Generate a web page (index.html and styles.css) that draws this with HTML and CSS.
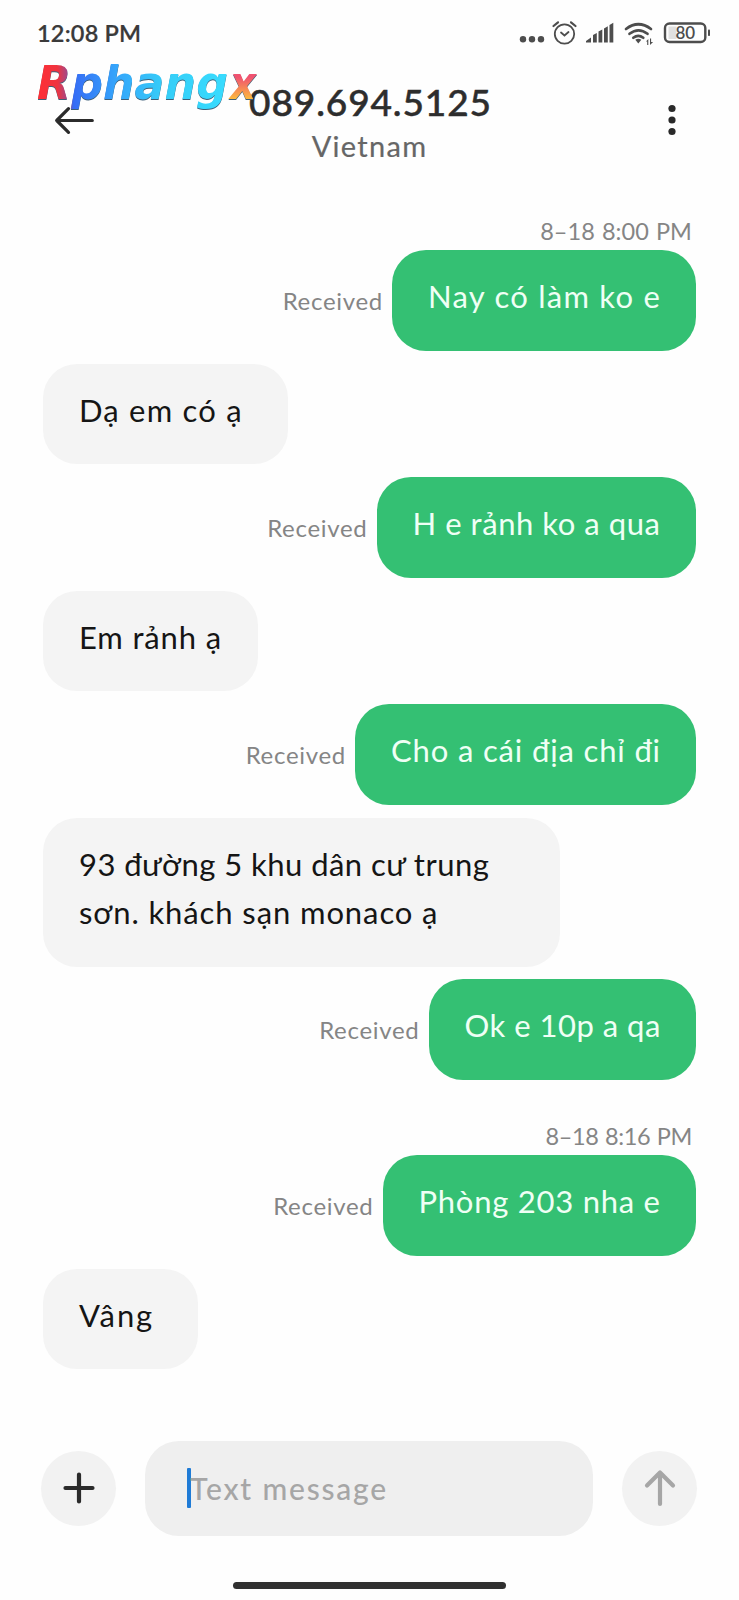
FILE: index.html
```html
<!DOCTYPE html>
<html lang="vi">
<head>
<meta charset="utf-8">
<title>Messages</title>
<link rel="stylesheet" href="styles.css">
</head>
<body>
<div class="phone">
  <div class="status">
    <span class="clock">12:08 PM</span>
    <svg class="status-icons" width="200" height="32" viewBox="0 0 200 32">
      <g fill="#4d4d4d">
        <circle cx="13" cy="22.300" r="3.200"/><circle cx="22" cy="22.300" r="3.200"/><circle cx="31" cy="22.300" r="3.200"/>
        <path d="M76 25.500v-1.500l5-3.500v5zM83 18l3.800-2v9.500H83zM88.500 14.500l3.800-2v13h-3.800zM94 11.500l3.800-2.200v16.200H94zM99.500 8l3.800-2.200v19.700h-3.800z"/>
        <path d="M125.300 22.800q3-2 6 0l-3 3.700z"/>
        <path d="M136 24.500l2.300-2.500v6h-1.100v-3.500zM140 21.500h1.100v3.500h2l-3.100 3z"/>
      </g>
      <g fill="none" stroke="#4d4d4d" stroke-linecap="round">
        <circle cx="54.500" cy="17" r="9.700" stroke-width="1.800"/>
        <path d="M51 15.500l3.500 3 4-3.500" stroke-width="1.800"/>
        <path d="M43.500 9l4.500-3.700M61 5.300l4.500 3.700" stroke-width="2.200"/>
        <path d="M116 12q12.300-9.500 25 0M119.500 16.800q9-7 18 0M123.300 20.800q5-3.800 10 0" stroke-width="2.700"/>
      </g>
      <rect x="158.500" y="9.500" width="8" height="12.500" fill="#e0e0e0"/>
      <rect x="155" y="6.500" width="40.300" height="18.500" rx="4.500" fill="none" stroke="#4d4d4d" stroke-width="2.400"/>
      <rect x="198" y="12.500" width="2" height="6.500" rx=".8" fill="#4d4d4d"/>
      <text class="battery" x="175.300" y="21.800" text-anchor="middle">80</text>
    </svg>
  </div>

  <div class="header">
    <svg class="back" width="42" height="30" viewBox="0 0 42 30" fill="none" stroke="#2b2b2b" stroke-width="3.200" stroke-linecap="round" stroke-linejoin="round"><path d="M38.300 14.500H2.700M14.500 2.700L2.700 14.500l11.800 11.800"/></svg>
    <div class="contact">
      <div class="number">089.694.5125</div>
      <div class="country">Vietnam</div>
    </div>
    <svg class="more" width="10" height="32" viewBox="0 0 10 32" fill="#292929"><circle cx="5" cy="4.500" r="3.600"/><circle cx="5" cy="16" r="3.600"/><circle cx="5" cy="27.500" r="3.600"/></svg>
    <svg class="logo" width="230" height="56" viewBox="0 0 230 56">
      <defs>
        <linearGradient id="word" gradientUnits="userSpaceOnUse" x1="5" y1="0" x2="200" y2="0">
          <stop offset="0" stop-color="#ff2f35"/><stop offset=".1" stop-color="#ef3440"/><stop offset=".165" stop-color="#8b4f9e"/><stop offset=".18" stop-color="#366cf5"/><stop offset=".4" stop-color="#35a5fb"/><stop offset=".65" stop-color="#36cef8"/><stop offset="1" stop-color="#38ddff"/>
        </linearGradient>
        <linearGradient id="ex" x1="0" y1="0" x2="0" y2="1"><stop offset=".4" stop-color="#f05270"/><stop offset=".8" stop-color="#fcb83f"/></linearGradient>
      </defs>
      <text class="logo-word" x="4" y="38.500" textLength="191" lengthAdjust="spacingAndGlyphs" fill="url(#word)">Rphang</text>
      <text class="logo-x" x="197" y="38.500" textLength="26" lengthAdjust="spacingAndGlyphs" fill="url(#ex)">x</text>
    </svg>
  </div>

  <div class="thread">
    <div class="stamp">8–18 8:00 PM</div>
    <div class="row sent"><span class="state">Received</span><div class="bubble m1">Nay có làm ko e</div></div>
    <div class="row"><div class="bubble m2">Dạ em có ạ</div></div>
    <div class="row sent"><span class="state">Received</span><div class="bubble m3">H e rảnh ko a qua</div></div>
    <div class="row"><div class="bubble m4">Em rảnh ạ</div></div>
    <div class="row sent"><span class="state">Received</span><div class="bubble m5">Cho a cái địa chỉ đi</div></div>
    <div class="row"><div class="bubble m6"><span class="line1">93 đường 5 khu dân cư trung</span><br><span class="line2">sơn. khách sạn monaco ạ</span></div></div>
    <div class="row sent"><span class="state">Received</span><div class="bubble m7">Ok e 10p a qa</div></div>
    <div class="stamp later">8–18 8:16 PM</div>
    <div class="row sent"><span class="state">Received</span><div class="bubble m8">Phòng 203 nha e</div></div>
    <div class="row"><div class="bubble m9">Vâng</div></div>
  </div>

  <div class="composer">
    <div class="round"><svg width="34" height="34" viewBox="0 0 34 34" stroke="#2b2b2b" stroke-width="4.200" stroke-linecap="round"><path d="M17 3.500v27M3.500 17h27"/></svg></div>
    <div class="field"><span class="caret"></span><span class="hint">Text message</span></div>
    <div class="round"><svg width="34" height="38" viewBox="0 0 34 38" fill="none" stroke="#a6a6a6" stroke-width="4.200" stroke-linecap="round" stroke-linejoin="round"><path d="M17 35V3.500M4 16.500l13-13 13 13"/></svg></div>
  </div>
  <div class="home"></div>
</div>
</body>
</html>
```
FILE: styles.css
```css
* { box-sizing: border-box; }
body { margin: 0; background: #fefefe; font-family: Lato, "Noto Sans", sans-serif; }
.phone { width: 739px; height: 1600px; overflow: hidden; display: flex; flex-direction: column; }

.status { height: 60px; padding: 17px 29px 0 37px; display: flex; justify-content: space-between; align-items: flex-start; }
.clock { font-size: 23.500px; line-height: 32px; font-weight: 600; color: #3a3a3a; letter-spacing: .2px; -webkit-text-stroke: .2px #3a3a3a; }
.status-icons { flex: none; }
.battery { font: 600 17px Lato, sans-serif; fill: #4d4d4d; }

.header { position: relative; height: 156px; padding: 0 62px 0 54px; display: flex; align-items: flex-start; }
.back { margin-top: 46px; }
.more { margin-top: 44px; }
.contact { flex: 1; text-align: center; padding: 20px 22px 0 0; white-space: nowrap; }
.number { font-size: 37px; line-height: 43px; font-weight: 500; color: #2d2d2d; letter-spacing: .9px; -webkit-text-stroke: .5px #2d2d2d; }
.country { font-size: 29px; line-height: 45px; color: #666; letter-spacing: 1.300px; text-indent: -2px; -webkit-text-stroke: .2px #666; }
.logo { position: absolute; left: 33px; top: 0; overflow: visible; filter: drop-shadow(.7px 1.300px 0 #3e5f78); }
.logo-word { font: italic 700 47px "DejaVu Sans", sans-serif; }
.logo-x { font: italic 700 46px "DejaVu Sans", sans-serif; }

.thread { height: 1225px; padding: 0 43px; display: flex; flex-direction: column; gap: 12.900px; }
.stamp { height: 34px; line-height: 30px; margin-bottom: -12.900px; padding-right: 4px; text-align: right; font-size: 23.500px; color: #858585; letter-spacing: .05px; word-spacing: 1px; }
.later { margin-top: 28px; letter-spacing: -.4px; }
.row { display: flex; align-items: center; gap: 9px; }
.sent { justify-content: flex-end; }
.state { font-size: 24px; line-height: 30px; color: #858585; letter-spacing: .7px; padding-top: 1px; }
.bubble { flex: none; padding: 22px 36px 30.700px; border-radius: 34px; background: #f4f4f4; color: #151515; font-size: 31px; line-height: 48px; word-spacing: 0; white-space: nowrap; }
.sent .bubble { background: #34c073; color: #effff5; }
.m1 { width: 304px; letter-spacing: 1.250px; }
.m2 { width: 244.500px; letter-spacing: 1.200px; }
.m3 { width: 319.500px; letter-spacing: .55px; }
.m4 { width: 214.500px; letter-spacing: .85px; }
.m5 { width: 341px; letter-spacing: .85px; }
.m6 { width: 517px; }
.line1 { letter-spacing: .46px; }
.line2 { letter-spacing: .9px; }
.m7 { width: 267.500px; letter-spacing: .5px; }
.m8 { width: 313.500px; letter-spacing: .75px; }
.m9 { width: 154.500px; letter-spacing: 1.900px; }

.composer { height: 94.500px; padding: 0 42px 0 41px; display: flex; align-items: center; justify-content: space-between; }
.round { width: 75px; height: 75px; border-radius: 50%; background: #f2f2f2; display: flex; align-items: center; justify-content: center; }
.field { width: 448px; height: 94.500px; border-radius: 34px; background: #efefef; padding-left: 42px; display: flex; align-items: center; }
.caret { width: 4px; height: 40px; background: #1f7bd6; border-radius: 1px; }
.hint { margin-left: -1px; font-size: 30px; font-weight: 500; color: #a6a6a6; letter-spacing: 1.800px; }
.home { width: 273px; height: 7px; border-radius: 4px; background: #303030; margin: 46px 0 0 233px; }
```
